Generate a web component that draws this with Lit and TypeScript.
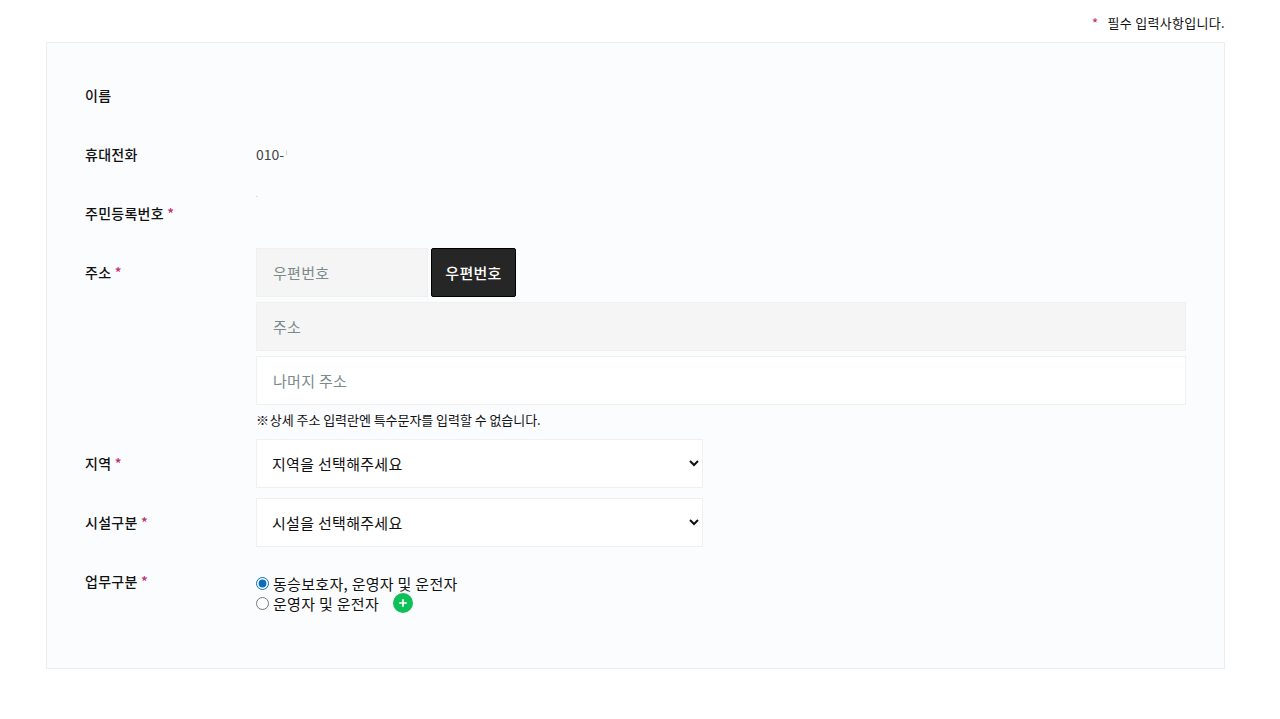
import { LitElement, html, css } from 'lit';
import { customElement } from 'lit/decorators.js';

@customElement('app-root')
export class AppRoot extends LitElement {
    static styles = css`
        :host {
            display: block;
            height: 719px;
            box-sizing: border-box;
            padding: 14px 55px 0 46px;
            background: #fff;
            font-family: 'Noto Sans CJK KR', 'Noto Sans', sans-serif;
            font-size: 14px;
            color: #111;
        }

        .required-note {
            display: flex;
            justify-content: flex-end;
            height: 28px;
            line-height: 18px;
            font-size: 13px;
            letter-spacing: 0.3px;
        }

        .required-note .star {
            margin-right: 9px;
            font-size: 14px;
        }

        .star {
            color: #c2306b;
        }

        .panel {
            box-sizing: border-box;
            height: 627px;
            padding: 28px 38px 0;
            background: #fbfcfe;
            border: 1px solid #e9eeee;
        }

        .row {
            display: grid;
            grid-template-columns: 171px 1fr;
            margin-bottom: 10px;
        }

        .label {
            height: 49px;
            line-height: 49px;
            font-weight: 500;
            letter-spacing: 0.25px;
        }

        .value {
            height: 49px;
            line-height: 49px;
            color: #444;
        }

        /* masked remainder of the phone number */
        .masked {
            display: inline-block;
            width: 1px;
            height: 5px;
            margin-left: 2px;
            vertical-align: 5px;
            background: #d8dcdc;
        }

        .masked-id {
            width: 2px;
            height: 1px;
            margin-top: 7px;
            background: #d8dcdc;
        }

        .fields {
            display: flex;
            flex-direction: column;
            gap: 5px;
        }

        .zip {
            display: flex;
            gap: 3px;
        }

        input,
        select {
            box-sizing: border-box;
            height: 49px;
            padding: 0 15px 0 16px;
            border: 1px solid #eff1f1;
            border-radius: 0;
            background: #fff;
            font: inherit;
            font-size: 15px;
            letter-spacing: 0.3px;
            color: #111;
            outline: none;
        }

        input::placeholder {
            color: #7b8a8b;
            opacity: 1;
        }

        input.locked {
            background: #f5f5f5;
        }

        .zip input {
            width: 172px;
        }

        .wide {
            width: 100%;
        }

        button {
            box-sizing: border-box;
            width: 85px;
            height: 49px;
            padding: 0;
            border: 1px solid #000;
            border-radius: 2px;
            background: #262626;
            color: #fff;
            font: inherit;
            font-size: 15px;
            font-weight: 500;
            letter-spacing: 0.3px;
        }

        .hint {
            height: 19px;
            line-height: 19px;
            font-size: 13px;
            letter-spacing: -0.05px;
        }

        .hint .mark {
            margin-right: -2px;
        }

        select {
            width: 447px;
            padding-left: 11px;
        }

        .radios {
            display: flex;
            flex-direction: column;
            padding-top: 16px;
            font-size: 15px;
            letter-spacing: 0.3px;
        }

        .radios label {
            display: flex;
            align-items: center;
            height: 20px;
        }

        .radios input {
            width: 13px;
            height: 13px;
            margin: 0 4px 0 0;
            padding: 0;
            accent-color: #0a6ebd;
        }

        .add {
            display: flex;
            align-items: center;
            justify-content: center;
            width: 20px;
            height: 20px;
            margin-left: 14px;
            border-radius: 50%;
            background: #0fbf58;
        }
    `;

    render() {
        return html`
            <div class="required-note"><span class="star">*</span>필수 입력사항입니다.</div>
            <div class="panel">
                <div class="row"><div class="label">이름</div></div>
                <div class="row">
                    <div class="label">휴대전화</div>
                    <div class="value">010-<span class="masked"></span></div>
                </div>
                <div class="row">
                    <div class="label">주민등록번호 <span class="star">*</span></div>
                    <div class="masked-id"></div>
                </div>
                <div class="row">
                    <div class="label">주소 <span class="star">*</span></div>
                    <div class="fields">
                        <div class="zip">
                            <input class="locked" placeholder="우편번호" readonly />
                            <button>우편번호</button>
                        </div>
                        <input class="wide locked" placeholder="주소" readonly />
                        <input class="wide" placeholder="나머지 주소" />
                        <div class="hint"><span class="mark">※</span> 상세 주소 입력란엔 특수문자를 입력할 수 없습니다.</div>
                    </div>
                </div>
                <div class="row">
                    <div class="label">지역 <span class="star">*</span></div>
                    <select><option>지역을 선택해주세요</option></select>
                </div>
                <div class="row">
                    <div class="label">시설구분 <span class="star">*</span></div>
                    <select><option>시설을 선택해주세요</option></select>
                </div>
                <div class="row">
                    <div class="label">업무구분 <span class="star">*</span></div>
                    <div class="radios">
                        <label><input type="radio" name="work" checked />동승보호자, 운영자 및 운전자</label>
                        <label>
                            <input type="radio" name="work" />운영자 및 운전자
                            <span class="add">
                                <svg width="10" height="10" viewBox="0 0 10 10">
                                    <path d="M5 1.2v7.6M1.2 5h7.6" stroke="#fff" stroke-width="1.7" fill="none" />
                                </svg>
                            </span>
                        </label>
                    </div>
                </div>
            </div>
        `;
    }
}
